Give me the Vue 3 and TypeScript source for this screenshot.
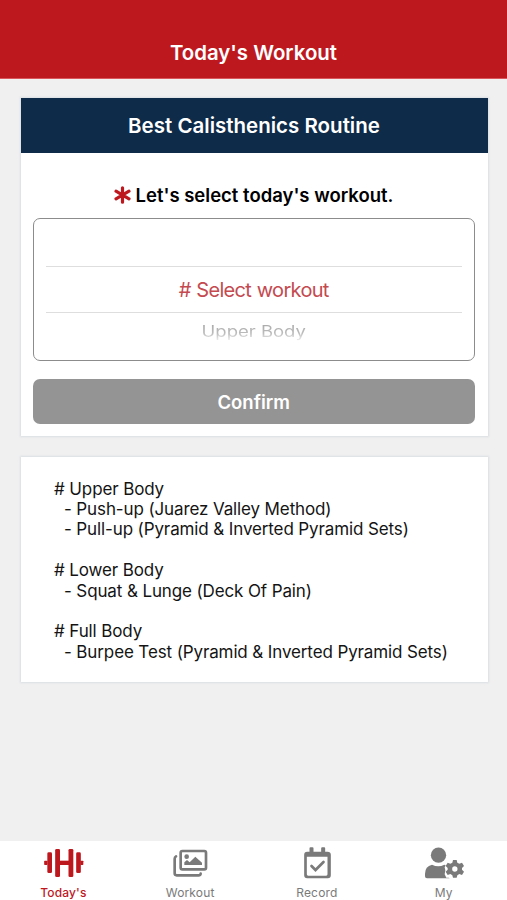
<script setup lang="ts">
import { ref } from 'vue'

interface Routine { name: string; items: string[] }
interface Tab { id: string; label: string }

const routines: Routine[] = [
  { name: 'Upper Body', items: ['Push-up (Juarez Valley Method)', 'Pull-up (Pyramid & Inverted Pyramid Sets)'] },
  { name: 'Lower Body', items: ['Squat & Lunge (Deck Of Pain)'] },
  { name: 'Full Body', items: ['Burpee Test (Pyramid & Inverted Pyramid Sets)'] },
]
const tabs: Tab[] = [
  { id: 'today', label: "Today's" },
  { id: 'workout', label: 'Workout' },
  { id: 'record', label: 'Record' },
  { id: 'my', label: 'My' },
]
const active = ref('today')
</script>

<template>
  <div class="screen">
    <header class="topbar"><h1>Today's Workout</h1></header>
    <main class="content">
      <section class="card">
        <h2 class="card-head"><span>Best Calisthenics Routine</span></h2>
        <div class="card-body">
          <p class="prompt">
            <svg class="star" viewBox="0 0 17 18"><path d="M8.500 1.800v14.400M2 5.200l13 7.600M15 5.200L2 12.800" /></svg>
            <span>Let's select today's workout.</span>
          </p>
          <div class="picker">
            <div class="slot"></div>
            <div class="slot selected"><span># Select workout</span></div>
            <div class="slot next"><span>Upper Body</span></div>
          </div>
          <button class="confirm" type="button"><span>Confirm</span></button>
        </div>
      </section>
      <section class="card list">
        <div v-for="r in routines" :key="r.name" class="group">
          <p># {{ r.name }}</p>
          <p v-for="i in r.items" :key="i" class="item">- {{ i }}</p>
        </div>
      </section>
    </main>
    <nav class="tabs">
      <a v-for="t in tabs" :key="t.id" class="tab" :class="{ active: active === t.id }" @click="active = t.id">
        <svg v-if="t.id === 'today'" class="icon" viewBox="0 0 120 96">
          <g fill="currentColor">
            <rect x="36.500" y="6" width="14.500" height="84" rx="4" />
            <rect x="76.500" y="6" width="14.500" height="84" rx="4" />
            <rect x="13" y="16" width="14" height="62" rx="4" />
            <rect x="99.500" y="16" width="14" height="62" rx="4" />
            <rect x="3.500" y="41" width="10" height="13" rx="2" />
            <rect x="112" y="41" width="9" height="13" rx="2" />
            <rect x="50" y="41" width="28" height="13" />
          </g>
        </svg>
        <svg v-else-if="t.id === 'workout'" class="icon" viewBox="0 0 120 96">
          <g fill="none" stroke="currentColor" stroke-width="8" stroke-linecap="round">
            <rect x="32" y="12" width="76" height="55" rx="5" />
            <path d="M18 28q-4 2-4 7v44q0 6 6 6h66q5 0 6-5" />
          </g>
          <circle cx="50" cy="29" r="7" fill="currentColor" />
          <path d="M43 54v-8l8-7 8 7 17-17 20 18v7z" fill="currentColor" />
        </svg>
        <svg v-else-if="t.id === 'record'" class="icon" viewBox="0 0 120 96">
          <g transform="translate(10.500 0)">
            <path fill="currentColor" fill-rule="evenodd" d="M27 14V4q0-3 3-3h6q3 0 3 3v10h23V4q0-3 3-3h6q3 0 3 3v10h7q10 0 10 9v62q0 9-9 9H20q-9 0-9-9V23q0-9 9-9zM19 29v53q0 4 4 4h54q4 0 4-4V29z" />
            <path d="M33 57l12 12 24-24" fill="none" stroke="currentColor" stroke-width="8" stroke-linecap="round" />
          </g>
        </svg>
        <svg v-else class="icon" viewBox="0 0 120 96">
          <circle cx="43.500" cy="24.500" r="23" fill="currentColor" />
          <path fill="currentColor" d="M9 94q-6 0-6-6v-8q0-22 21-27 19 9 37 0l4 2-3 6 2 9-2 12 5 10h7l3 2z" />
          <path fill="currentColor" fill-rule="evenodd" d="M87 39h11l2 8 6 3 8-3 6 10-6 6v5l6 6-6 10-8-3-6 4-2 7H87l-2-7-6-4-8 3-6-10 6-6v-5l-6-6 6-10 8 3 6-3zM92.500 58a8 8 0 1 0 0 16a8 8 0 1 0 0-16z" />
        </svg>
        <span>{{ t.label }}</span>
      </a>
    </nav>
  </div>
</template>

<style>
body { background: #f0f0f0; }
</style>

<style scoped>
* { box-sizing: border-box; }
h1, h2, p { margin: 0; }
.screen { height: 900px; display: flex; flex-direction: column; font-family: Inter, "Liberation Sans", sans-serif; color: #141414; background: #f0f0f0; overflow: hidden; }
.topbar { height: 79px; flex: none; background: #be181f; border-bottom: 1px solid #d9575c; padding-top: 39.5px; text-align: center; color: #fff; }
h1 { font-size: 20.4px; line-height: 26px; font-weight: 600; }
.content { flex: 1; padding: 19px 19.5px 0 20.5px; display: flex; flex-direction: column; gap: 21px; }
.card { background: #fff; box-shadow: 0 0 2px 1px #dbdfe2; }
.card-head { height: 55px; background: #0e2b49; color: #fff; font-size: 20.5px; line-height: 56px; font-weight: 600; text-align: center; }
.card-body { padding: 30px 12.5px 12px 12px; }
.prompt { display: flex; align-items: center; justify-content: center; gap: 4.5px; height: 24px; font-size: 18.5px; font-weight: 600; line-height: 23px; color: #000; }
.star { width: 17px; height: 18px; fill: none; stroke: #be181f; stroke-width: 3.2; stroke-linecap: round; }
.picker { margin-top: 11px; height: 143px; border: 1.5px solid #8c8c8c; border-radius: 7px; padding: 0 12px; }
.slot { height: 48px; text-align: center; border-bottom: 1px solid #dedede; }
.slot.selected { height: 46px; color: #c44a50; font-size: 20px; line-height: 46px; letter-spacing: -.68px; word-spacing: .6px; }
.slot.next { border: 0; height: 40px; line-height: 37px; font-size: 18.5px; }
.slot.next span { display: inline-block; transform: scaleY(.82); background: linear-gradient(#aaa 25%, #bbb 55%, #eee 80%); background-clip: text; color: transparent; }
.confirm { display: block; width: 100%; height: 45px; margin-top: 18px; border: 0; border-radius: 7px; background: #949494; color: #fff; font: 600 18.5px/46px Inter, sans-serif; padding: 0; }
.list { height: 225px; padding: 21.5px 33.5px 0; font-size: 17px; line-height: 20.4px; letter-spacing: -.12px; display: flex; flex-direction: column; gap: 20.4px; white-space: nowrap; }
.item { padding-left: 10px; }
.tabs { height: 59px; flex: none; background: #fff; display: grid; grid-template-columns: repeat(4, 1fr); }
.tab { display: flex; flex-direction: column; align-items: center; padding-top: 6px; color: #7a7a7a; font-size: 12px; line-height: 17px; font-weight: 400; letter-spacing: .15px; gap: 5px; }
.tab.active { color: #be181f; font-weight: 500; }
.icon { width: 40px; height: 32px; overflow: visible; }
</style>
